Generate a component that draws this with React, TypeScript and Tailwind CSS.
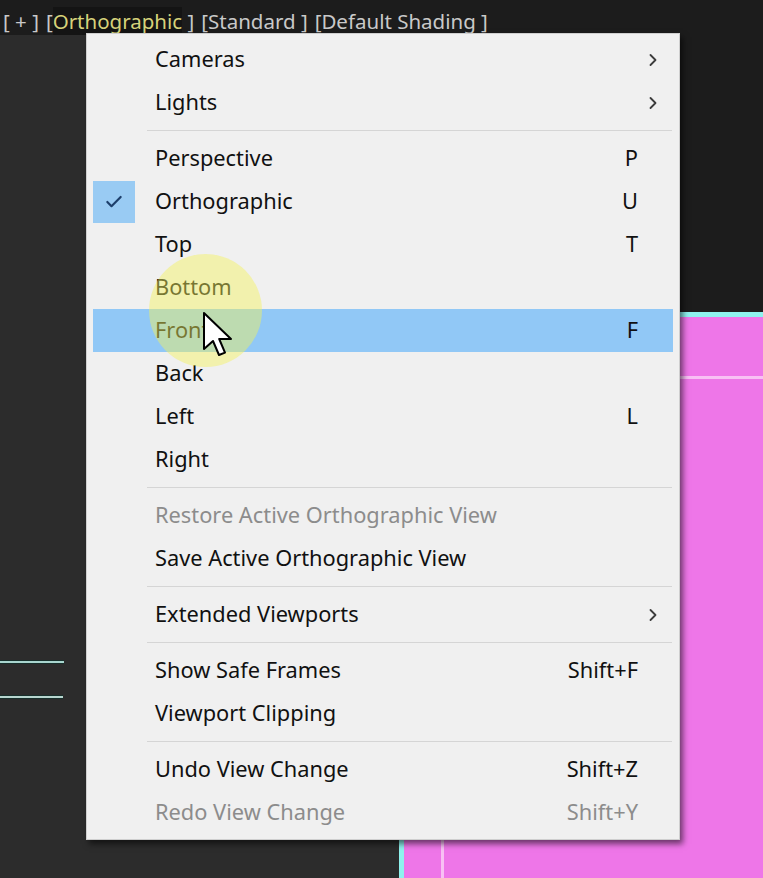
import { ChevronRight, Check } from 'lucide-react';

type Item = {
  label: string;
  shortcut?: string;
  sub?: boolean;
  disabled?: boolean;
  checked?: boolean;
  active?: boolean;
};

const groups: Item[][] = [
  [
    { label: 'Cameras', sub: true },
    { label: 'Lights', sub: true },
  ],
  [
    { label: 'Perspective', shortcut: 'P' },
    { label: 'Orthographic', shortcut: 'U', checked: true },
    { label: 'Top', shortcut: 'T' },
    { label: 'Bottom' },
    { label: 'Front', shortcut: 'F', active: true },
    { label: 'Back' },
    { label: 'Left', shortcut: 'L' },
    { label: 'Right' },
  ],
  [
    { label: 'Restore Active Orthographic View', disabled: true },
    { label: 'Save Active Orthographic View' },
  ],
  [{ label: 'Extended Viewports', sub: true }],
  [
    { label: 'Show Safe Frames', shortcut: 'Shift+F' },
    { label: 'Viewport Clipping' },
  ],
  [
    { label: 'Undo View Change', shortcut: 'Shift+Z' },
    { label: 'Redo View Change', shortcut: 'Shift+Y', disabled: true },
  ],
];

function MenuRow({ item }: { item: Item }) {
  return (
    <div
      className={`flex items-center h-[43px] mx-[6px] ${item.active ? 'bg-[#91c8f6]' : ''} ${
        item.disabled ? 'text-[#8c8c8c]' : 'text-[#111]'
      }`}
    >
      <div className="w-[42px] h-[42px] flex items-center justify-center">
        {item.checked && (
          <div className="w-[42px] h-[42px] bg-[#99cbf3] flex items-center justify-center">
            <Check size={20} strokeWidth={2.6} className="text-[#1d3f6b]" />
          </div>
        )}
      </div>
      <span className="ml-[20px] flex-1">{item.label}</span>
      <span className="w-[90px] text-right">{item.shortcut}</span>
      <span className="w-[35px] flex items-center pl-[5px]">
        {item.sub && <ChevronRight size={20} strokeWidth={2.2} className="text-[#3c3c3c]" />}
      </span>
    </div>
  );
}

export default function App() {
  return (
    <div className="relative w-[763px] h-[878px] overflow-hidden bg-[#1c1c1c] font-['Noto_Sans',sans-serif]">
      {/* viewport top label */}
      <div className="h-[35px] flex items-center gap-[7px] pl-[3px] pt-[7px] text-[20.5px] text-[#c9c9c9] whitespace-pre">
        <span>[ + ]</span>
        <span>
          [<span className="bg-[#141414] text-[#d6d27a]">Orthographic</span> ]
        </span>
        <span>[Standard ]</span>
        <span>[Default Shading ]</span>
      </div>

      {/* left viewport */}
      <div className="absolute left-0 top-[35px] w-[400px] h-[843px] bg-[#2c2c2c]">
        <div className="absolute left-0 top-[625px] w-[64px] h-[4px] bg-[#a9d6cf] border-y border-[#18302c]" />
        <div className="absolute left-0 top-[660px] w-[63px] h-[4px] bg-[#b8d6cf] border-y border-[#18302c]" />
      </div>

      {/* magenta object */}
      <div className="absolute left-[399px] top-[312px] w-[380px] h-[580px] border-l-[5px] border-t-[5px] border-[#8ff2ee] bg-[#ee76e8]">
        <div className="absolute left-[37px] top-[59px] w-[400px] h-[600px] border-l-[3px] border-t-[3px] border-[#f8c0f4]" />
      </div>

      {/* menu */}
      <div className="absolute left-[86px] top-[33px] w-[594px] bg-[#f0f0f0] border border-[#cfcfcf] pt-[4px] pb-[5px] text-[21.8px] shadow-[3px_4px_6px_rgba(0,0,0,0.55)]">
        {groups.map((g, gi) => (
          <div key={gi}>
            {gi > 0 && <div className="ml-[60px] mr-[7px] my-[6px] h-px bg-[#d5d5d5]" />}
            {g.map((it) => (
              <MenuRow key={it.label} item={it} />
            ))}
          </div>
        ))}
      </div>

      {/* click highlight */}
      <div className="absolute left-[149px] top-[254px] w-[113px] h-[113px] rounded-full bg-[#f3f25a]/45" />

      {/* cursor */}
      <svg className="absolute left-[202px] top-[311px]" width="34" height="50" viewBox="0 0 17 25">
        <path
          d="M1 1 L1 19 L5.5 15 L8.5 22 L11.5 20.8 L8.6 14 L14.5 14 Z"
          fill="#fff"
          stroke="#000"
          strokeWidth="1"
          strokeLinejoin="round"
        />
      </svg>
    </div>
  );
}
